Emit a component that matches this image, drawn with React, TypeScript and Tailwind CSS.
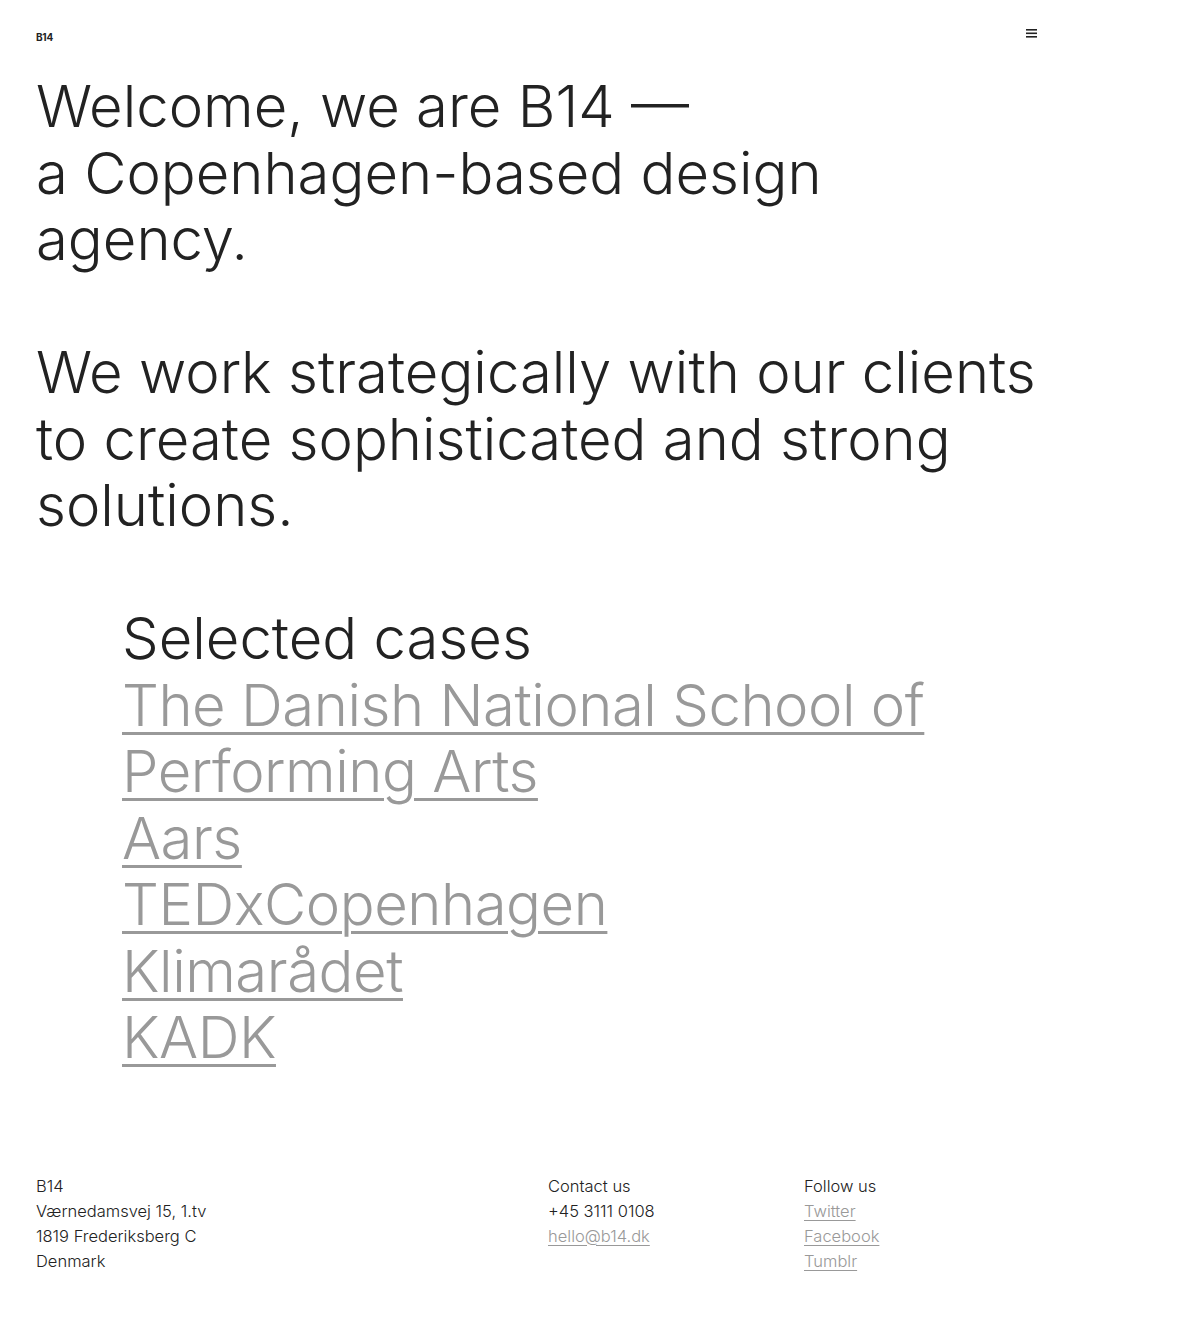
import React from "react";

const cases = [
  ["The Danish National School of", "Performing Arts"],
  ["Aars"],
  ["TEDxCopenhagen"],
  ["Klimarådet"],
  ["KADK"],
];

export default function App() {
  return (
    <div className="min-h-screen bg-white text-[#222] font-['Inter',sans-serif] px-[36px]">
      {/* header */}
      <div className="w-[1000px] flex justify-between items-start pt-[32px]">
        <div className="text-[10px] font-bold leading-none tracking-tight">B14</div>
        <svg width="11" height="9" viewBox="0 0 11 9" className="mt-[-3px] mr-[-1px]">
          <rect x="0" y="0" width="11" height="1.6" fill="#222" />
          <rect x="0" y="3.5" width="11" height="1.6" fill="#222" />
          <rect x="0" y="7" width="11" height="1.6" fill="#222" />
        </svg>
      </div>

      {/* intro */}
      <div className="mt-[31px] text-[58px] leading-[66.5px] font-light">
        <p>
          Welcome, we are B14 —<br />
          a Copenhagen-based design<br />
          agency.
        </p>
        <p className="mt-[66.5px]">
          We work strategically with our clients<br />
          to create sophisticated and strong<br />
          solutions.
        </p>
      </div>

      {/* cases */}
      <div className="mt-[66.5px] pl-[86px] text-[58px] leading-[66.5px] font-light">
        <h2>Selected cases</h2>
        <ul>
          {cases.map((c) => (
            <li key={c[0]}>
              <a
                href="#"
                className="text-[#999] tracking-[-0.008em] underline decoration-[3px] underline-offset-[6px] decoration-[#999]"
              >
                {c.map((line, i) => (
                  <React.Fragment key={line}>
                    {i > 0 && <br />}
                    {line}
                  </React.Fragment>
                ))}
              </a>
            </li>
          ))}
        </ul>
      </div>

      {/* footer */}
      <footer className="mt-[103px] w-[1024px] grid grid-cols-4 text-[16.5px] leading-[25px] font-light pb-[40px]">
        <div className="col-span-2">
          <p>B14</p>
          <p>Værnedamsvej 15, 1.tv</p>
          <p>1819 Frederiksberg C</p>
          <p>Denmark</p>
        </div>
        <div>
          <p>Contact us</p>
          <p>+45 3111 0108</p>
          <p>
            <a href="#" className="text-[#999] underline underline-offset-[3px]">hello@b14.dk</a>
          </p>
        </div>
        <div>
          <p>Follow us</p>
          <p><a href="#" className="text-[#999] underline underline-offset-[3px]">Twitter</a></p>
          <p><a href="#" className="text-[#999] underline underline-offset-[3px]">Facebook</a></p>
          <p><a href="#" className="text-[#999] underline underline-offset-[3px]">Tumblr</a></p>
        </div>
      </footer>
    </div>
  );
}
